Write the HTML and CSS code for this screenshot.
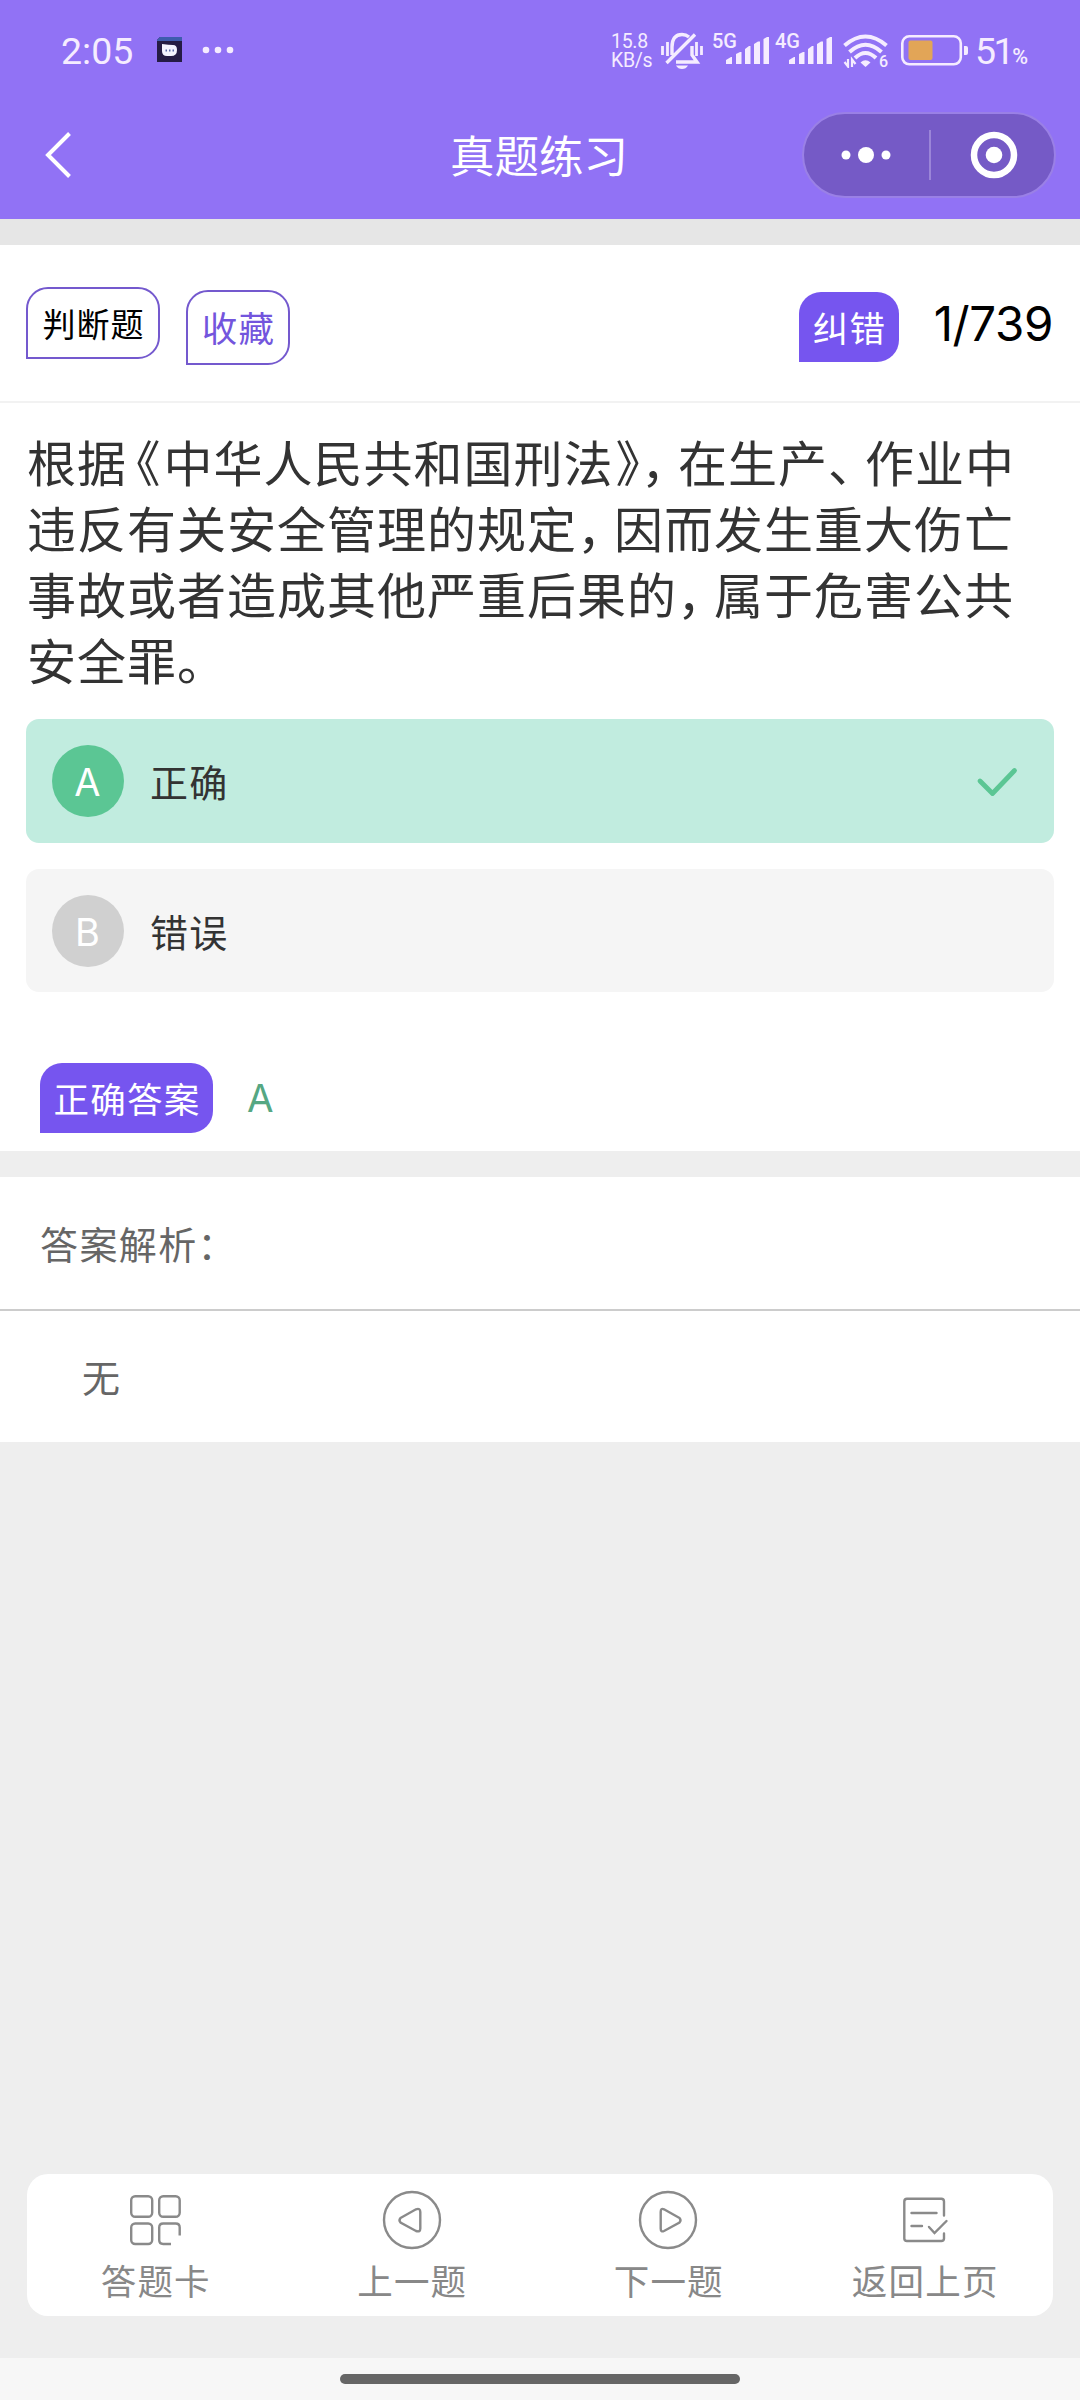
FILE: index.html
```html
<!DOCTYPE html>
<html lang="zh-CN">
<head>
<meta charset="utf-8">
<title>真题练习</title>
<link rel="stylesheet" href="styles.css">
</head>
<body>
<header class="header">
  <div class="status">
    <span class="clock">2:05</span>
    <svg class="app" width="25" height="25" viewBox="0 0 25 25"><path d="M3 0H25V25H0V3Z" fill="#251c44"/><path d="M3 0H25V4H0V3Z" fill="#3f5cae"/><path d="M5 7Q12 8 16 8Q20 8 20 13Q20 19 14 19H10Q5 19 5 14Z" fill="#f4f4ff"/><path d="M8.500 13.500h1.500m2 0h1.500m2 0h1.500" stroke="#5a6aa8" stroke-width="1.800"/></svg>
    <svg class="more" width="32" height="8" viewBox="0 0 32 8" fill="#f5ecff"><circle cx="4" cy="4" r="3.300"/><circle cx="16" cy="4" r="3.300"/><circle cx="28" cy="4" r="3.300"/></svg>
    <div class="speed"><span>15.8</span><span>KB/s</span></div>
    <svg class="bell" width="42" height="38" viewBox="0 0 42 38" fill="none" stroke="#f5ecff" stroke-width="3.400"><path d="M11 23V15C11 6 15 2.500 21 2.500Q25 2.500 28 5M31 14V23L36 30H15M5.500 31 34 2.500"/><path d="M1.500 14v9M6.500 10v14M35.500 10v14M40.500 14v9" stroke-width="2.800"/><path d="M15 33.500H27Q25 37 21 37T15 33.500Z" fill="#f5ecff" stroke="none"/></svg>
    <div class="signal s5"><span>5G</span><svg width="44" height="27" viewBox="0 0 44 27" fill="#f5ecff"><path d="M0 27V23L5 20H6V27ZM10 27V17L14 15H15.500V27ZM19 27V12L23 9H24.500V27ZM28 27V7L32 4.500H34V27ZM37.500 27V2L41 0H43V27Z"/></svg></div>
    <div class="signal s4"><span>4G</span><svg width="44" height="27" viewBox="0 0 44 27" fill="#f5ecff"><path d="M0 27V23L5 20H6V27ZM10 27V17L14 15H15.500V27ZM19 27V12L23 9H24.500V27ZM28 27V7L32 4.500H34V27ZM37.500 27V2L41 0H43V27Z"/></svg></div>
    <div class="wifi"><svg width="45" height="34" viewBox="0 0 45 34" fill="none" stroke="#f5ecff" stroke-width="4"><path d="M1.500 11.500Q22.500-6.500 43.500 11.500M6.500 18Q22.500 3.500 38.500 18M12 24Q22.500 14 33 24"/><path d="M17.500 28.500Q22.500 24 27.500 28.500L22.500 33Z" fill="#f5ecff" stroke="none"/><path d="M5 25v7.500L1.500 28M9 33v-7.500L12.500 30" stroke-width="2.200"/></svg><span>6</span></div>
    <svg class="battery" width="68" height="31" viewBox="0 0 68 31"><rect x="1.300" y="1.300" width="58.500" height="28" rx="7" fill="none" stroke="#f5ecff" stroke-width="2.600"/><rect x="7.500" y="5.500" width="24" height="19.500" rx="2" fill="#e2a557"/><path d="M63 11h2q2 0 2 2v5q0 2-2 2h-2Z" fill="#f5ecff"/></svg>
    <span class="level">51<small>%</small></span>
  </div>
  <div class="nav">
    <svg class="back" width="28" height="48" viewBox="0 0 28 48"><path d="M24.500 2.500 3 24 24.500 45.500" fill="none" stroke="#fff" stroke-width="4"/></svg>
    <h1 class="title">真题练习</h1>
    <div class="capsule">
      <svg width="50" height="20" viewBox="0 0 50 20" fill="#fff"><circle cx="5" cy="10" r="4.500"/><circle cx="25" cy="10" r="8"/><circle cx="45" cy="10" r="4.500"/></svg>
      <i class="split"></i>
      <svg width="48" height="48" viewBox="0 0 48 48"><circle cx="24" cy="24" r="20" fill="none" stroke="#fff" stroke-width="6.500"/><circle cx="24" cy="24" r="8.300" fill="#fff"/></svg>
    </div>
  </div>
</header>

<main>
  <section class="panel">
    <div class="tools">
      <span class="tag kind">判断题</span>
      <span class="tag collect">收藏</span>
      <span class="tag fill report">纠错</span>
      <span class="count">1/739</span>
    </div>
    <p class="question">根据<span class="half open">《</span>中华人民共和国刑法<span class="half close">》</span><span class="half pause">，</span>在生产<span class="half pause">、</span>作业中<br>违反有关安全管理的规定<span class="half pause">，</span>因而发生重大伤亡<br>事故或者造成其他严重后果的<span class="half pause">，</span>属于危害公共<br>安全罪。</p>
    <div class="options">
      <div class="option right"><b class="letter">A</b><span>正确</span><svg class="check" width="42" height="32" viewBox="0 0 42 32"><path d="M4 16 16.500 28.500 38.500 5.500" fill="none" stroke="#5bc694" stroke-width="4.800" stroke-linecap="round" stroke-linejoin="round"/></svg></div>
      <div class="option"><b class="letter">B</b><span>错误</span></div>
    </div>
    <div class="answer"><span class="tag fill">正确答案</span><span class="key">A</span></div>
  </section>
  <section class="analysis">
    <div class="heading">答案解析：</div>
    <div class="body">无</div>
  </section>
</main>

<nav class="tabs">
  <a class="tab"><svg width="60" height="60" viewBox="0 0 60 60"><rect x="6.200" y="6.200" width="21" height="20.500" rx="4"/><rect x="34.200" y="6.200" width="20.500" height="20.500" rx="4"/><rect x="6.200" y="33.500" width="21" height="20.500" rx="4"/><path d="M54.700 45.500V37.500Q54.700 33.500 50.700 33.500H38.200Q34.200 33.500 34.200 37.500V50Q34.200 54 38.200 54H46"/></svg><span>答题卡</span></a>
  <a class="tab"><svg width="60" height="60" viewBox="0 0 60 60"><circle cx="30" cy="30" r="28"/><path d="M18.500 28 34 19.300Q38.300 17.700 38.300 22V38.500Q38.300 42.500 34 41L18.500 32.500Q16.500 30.300 18.500 28Z"/></svg><span>上一题</span></a>
  <a class="tab"><svg width="60" height="60" viewBox="0 0 60 60"><circle cx="30" cy="30" r="28"/><path d="M41.500 28 26 19.300Q22.700 17.700 22.700 22V38.500Q22.700 42.500 26 41L41.500 32.500Q43.500 30.300 41.500 28Z"/></svg><span>下一题</span></a>
  <a class="tab"><svg width="60" height="60" viewBox="0 0 60 60" stroke-linecap="round"><path d="M49 25.500V11.500Q49 8.800 46.300 8.800H12Q9.300 8.800 9.300 11.500V48.500Q9.300 51 12 51H46.300Q49 51 49 48.500V43.500M16.500 23H41.500M16.500 36H27M34 37 39.500 43 51.500 31"/></svg><span>返回上页</span></a>
</nav>
<footer class="gesture"><i></i></footer>
</body>
</html>
```
FILE: styles.css
```css
* { box-sizing: border-box; }
body {
  margin: 0;
  width: 1080px;
  height: 2400px;
  display: flex;
  flex-direction: column;
  background: #eee;
  color: #333;
  font-family: "Noto Sans CJK SC", sans-serif;
  text-spacing-trim: space-all;
  overflow: hidden;
}
svg { display: block; flex: none; }
main { display: block; }

.header { height: 219px; background: #9172f5; color: #f5ecff; }
.status { height: 102px; display: flex; align-items: flex-start; padding-left: 61px; font-family: Roboto, sans-serif; }
.clock { width: 96px; margin-top: 32px; font-size: 37.500px; line-height: 38px; }
.app { margin-top: 37px; }
.more { margin: 46px 0 0 20px; }
.speed { width: 50px; margin: 32px 0 0 377px; display: flex; flex-direction: column; font-size: 19.500px; line-height: 19px; letter-spacing: -.3px; }
.bell { margin-top: 32px; }
.signal { width: 63px; height: 37px; margin-top: 32px; display: flex; align-items: flex-start; font-size: 20px; font-weight: 500; line-height: 19px; }
.signal span { width: 14px; white-space: nowrap; }
.signal svg { margin-top: 5px; }
.s5 { margin-left: 9px; }
.wifi { width: 45px; margin: 34px 0 0 5px; display: flex; align-items: flex-start; }
.wifi span { margin: 20px 0 0 -9px; font-size: 16px; font-weight: 500; line-height: 16px; }
.battery { margin: 35px 0 0 13px; }
.level { margin: 32px 0 0 6px; font-size: 37.500px; line-height: 38px; letter-spacing: -2.500px; white-space: nowrap; }
.level small { font-size: 21.500px; font-weight: 500; }

.nav { height: 105px; display: flex; align-items: center; padding: 0 24px 0 45px; }
.back { width: 28px; }
.title { width: 200px; margin: -2px 0 0 366px; text-align: center; color: #fff; font-size: 44.500px; font-weight: 400; line-height: 60px; white-space: nowrap; }
.capsule { width: 254px; height: 86px; margin-left: auto; padding: 0 36px 0 37px; display: flex; align-items: center; justify-content: space-between; border: 2px solid #9a80e6; border-radius: 43px; background: #755ac6; }
.split { width: 1.500px; height: 50px; margin-right: 1px; background: #9b85d8; }

.panel { height: 932px; border-top: 26px solid #e6e6e6; background: #fff; }
.tools { height: 158px; display: flex; align-items: flex-start; padding: 42px 27px 0 26px; border-bottom: 2px solid #f2f2f2; }
.tag { display: flex; justify-content: center; height: 72px; border: 2px solid #7459ce; border-radius: 22px 22px 22px 0; letter-spacing: 1.300px; padding-left: 1px; font-size: 35.500px; line-height: 69px; white-space: nowrap; }
.kind { width: 134px; color: #000; font-size: 33px; line-height: 68px; letter-spacing: 1px; }
.collect { width: 104px; height: 75px; margin: 3px 0 0 26px; color: #7355dd; line-height: 70px; }
.fill { height: 70px; border: 0; background: #7655ef; color: #fff; }
.report { width: 100px; margin: 5px 0 0 509px; }
.count { margin: 7px 0 0 auto; color: #000; font: 400 47.500px/60px Inter, sans-serif; letter-spacing: -.4px; }
.question { height: 316px; margin: 0; padding: 25px 0 0 27px; font-size: 49px; line-height: 66px; letter-spacing: 1px; white-space: nowrap; }
.half { font-feature-settings: "halt"; }
.open { padding: 0 2px 0 9px; }
.close { padding-left: 2px; }
.pause { padding-right: 11.500px; }
.options { display: flex; flex-direction: column; gap: 26px; padding: 0 26px; }
.option { height: 124px; display: flex; align-items: center; padding: 0 36px 0 26px; border-radius: 13px; background: #f5f5f5; font-size: 38px; letter-spacing: 1.300px; line-height: 50px; }
.option + .option { height: 123px; }
.option.right { background: #c1ecdf; }
.letter { width: 72px; height: 72px; margin-right: 26px; border-radius: 50%; background: #d0d0d0; color: #fff; text-align: center; font: 400 38px/74px Inter, sans-serif; }
.right .letter { background: #5bc694; }
.check { margin-left: auto; }
.answer { display: flex; padding: 71px 0 0 40px; }
.answer .tag { width: 173px; }
.key { margin-left: 34px; color: #55a783; font: 400 38.500px/71px Inter, sans-serif; }

.analysis { height: 291px; border-top: 26px solid #eee; background: #fff; color: #666; font-size: 38px; letter-spacing: 1.400px; }
.heading { height: 134px; padding: 39px 0 0 40px; border-bottom: 2px solid #ccc; line-height: 54px; }
.body { padding: 38px 0 0 82px; line-height: 54px; }

.tabs { width: 1026px; height: 142px; margin: auto auto 42px; display: grid; grid-template-columns: repeat(4, 1fr); border-radius: 21px; background: #fff; }
.tab { display: flex; flex-direction: column; align-items: center; padding-top: 16px; color: #888; font-size: 35.500px; line-height: 54px; letter-spacing: 1.200px; }
.tab svg { fill: none; stroke: #8a8a8a; stroke-width: 2.400; }
.tab span { margin: 3px 0 0 1px; }
.gesture { height: 42px; padding-top: 16px; background: #f7f7f7; }
.gesture i { display: block; width: 400px; height: 10px; margin: 0 auto; border-radius: 5px; background: #666; }
```
